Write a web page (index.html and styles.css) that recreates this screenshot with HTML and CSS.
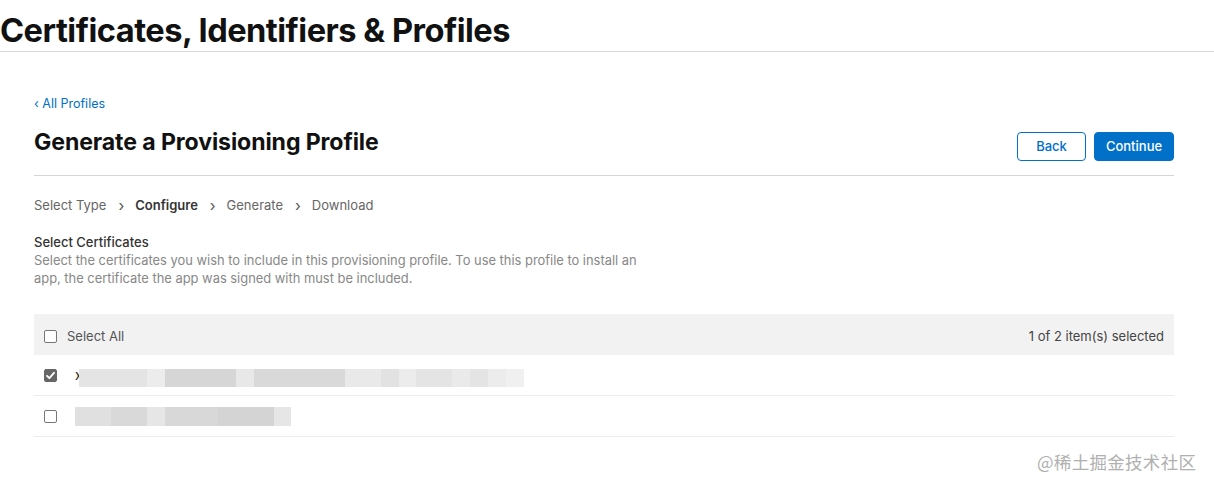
FILE: index.html
```html
<!DOCTYPE html>
<html>
<head>
<meta charset="utf-8">
<link rel="stylesheet" href="styles.css">
</head>
<body>
<header class="top">
  <h1 class="top-title">Certificates, Identifiers &amp; Profiles</h1>
</header>
<main class="main">
  <a class="back-link" href="#">‹ All Profiles</a>
  <div class="title-row">
    <h2 class="page-title">Generate a Provisioning Profile</h2>
    <div class="actions">
      <button class="btn btn-outline">Back</button>
      <button class="btn btn-primary">Continue</button>
    </div>
  </div>
  <nav class="steps">
    <span class="step">Select Type</span>
    <span class="chev">›</span>
    <span class="step step-active">Configure</span>
    <span class="chev">›</span>
    <span class="step">Generate</span>
    <span class="chev">›</span>
    <span class="step">Download</span>
  </nav>
  <section class="section">
    <h3 class="section-title">Select Certificates</h3>
    <p class="section-desc">Select the certificates you wish to include in this provisioning profile. To use this profile to install an<br>app, the certificate the app was signed with must be included.</p>
  </section>
  <div class="table">
    <div class="table-head">
      <label class="check-label"><span class="cb"></span><span>Select All</span></label>
      <span class="count">1 of 2 item(s) selected</span>
    </div>
    <div class="row">
      <span class="cb cb-checked"><svg viewBox="0 0 13 13" width="13" height="13"><path d="M3 6.8 L5.4 9.2 L10 3.8" fill="none" stroke="#fff" stroke-width="1.8" stroke-linecap="round" stroke-linejoin="round"/></svg></span>
      <span class="row-text">x</span>
      <span class="blur blur-1">
        <i style="width:68px;background:#e4e4e4"></i><i style="width:18px;background:#ececec"></i><i style="width:71px;background:#d6d6d6"></i><i style="width:18px;background:#e8e8e8"></i><i style="width:91px;background:#d9d9d9"></i><i style="width:36px;background:#e9e9e9"></i><i style="width:18px;background:#e2e2e2"></i><i style="width:17px;background:#ececec"></i><i style="width:36px;background:#e4e4e4"></i><i style="width:18px;background:#eaeaea"></i><i style="width:18px;background:#e4e4e4"></i><i style="width:18px;background:#ececec"></i><i style="width:18px;background:#f0f0f0"></i>
      </span>
    </div>
    <div class="row">
      <span class="cb"></span>
      <span class="blur blur-2">
        <i style="width:36px;background:#e0e0e0"></i><i style="width:36px;background:#d9d9d9"></i><i style="width:18px;background:#e6e6e6"></i><i style="width:53px;background:#d8d8d8"></i><i style="width:56px;background:#d4d4d4"></i><i style="width:17px;background:#e6e6e6"></i>
      </span>
    </div>
  </div>
</main>
<div class="watermark">@稀土掘金技术社区</div>
</body>
</html>
```
FILE: styles.css
```css
* { box-sizing: border-box; }
html, body { margin: 0; padding: 0; }
body {
  width: 1214px;
  height: 489px;
  overflow: hidden;
  background: #fff;
  font-family: Inter, "Noto Sans", sans-serif;
  color: #333;
  position: relative;
}
.top {
  height: 52px;
  border-bottom: 1px solid #d9d9d9;
  display: flex;
  align-items: flex-end;
}
.top-title {
  margin: 0 0 1px 0;
  font-size: 32.6px;
  font-weight: 700;
  letter-spacing: -0.5px;
  color: #111;
  line-height: 40px;
}
.main {
  width: 1140px;
  margin-left: 34px;
  padding-top: 44px;
}
.back-link {
  display: block;
  font-size: 12.5px;
  color: #0070c9;
  text-decoration: none;
  line-height: 16px;
}
.title-row {
  display: flex;
  justify-content: space-between;
  align-items: center;
  margin-top: 17px;
  border-bottom: 1px solid #d6d6d6;
  padding-bottom: 15px;
  box-sizing: content-box;
  height: 31px;
}
.page-title {
  margin: -6px 0 0 0;
  font-size: 23.1px;
  font-weight: 700;
  color: #111;
  letter-spacing: -0.1px;
}
.actions {
  display: flex;
  gap: 8px;
  align-self: flex-end;
  margin-bottom: -1px;
}
.btn {
  height: 29px;
  border-radius: 4px;
  font-family: Inter, "Noto Sans", sans-serif;
  font-size: 13px;
  font-weight: 500;
  padding: 0 0 2px 0;
  cursor: pointer;
}
.btn-outline {
  width: 69px;
  background: #fff;
  border: 1px solid #0070c9;
  color: #0070c9;
}
.btn-primary {
  width: 80px;
  background: #0070c9;
  border: 1px solid #0070c9;
  color: #fff;
}
.steps {
  display: flex;
  align-items: center;
  margin-top: 18px;
  font-size: 13px;
  line-height: 18px;
  color: #666;
}
.chev {
  font-size: 15px;
  margin: 3px 11px 0 12px;
  color: #555;
}
.step-active {
  font-weight: 600;
  color: #333;
}
.section {
  margin-top: 18px;
}
.section-title {
  margin: 0;
  font-size: 13px;
  font-weight: 500;
  color: #333;
  line-height: 18px;
}
.section-desc {
  margin: 1px 0 0 0;
  font-size: 12.9px;
  line-height: 18px;
  color: #888;
}
.table {
  margin-top: 26px;
}
.table-head {
  height: 41px;
  background: #f2f2f2;
  display: flex;
  align-items: center;
  justify-content: space-between;
  padding: 3px 10px 0 10px;
  font-size: 13px;
  color: #555;
}
.check-label {
  display: flex;
  align-items: center;
  gap: 10px;
}
.count { color: #444; }
.cb {
  width: 13px;
  height: 13px;
  border: 1px solid #767676;
  border-radius: 2px;
  background: #fff;
  display: inline-flex;
  flex: none;
}
.cb-checked {
  background: #666;
  border-color: #666;
}
.cb-checked svg { margin: -1px; }
.row {
  height: 41px;
  border-bottom: 1px solid #ececec;
  display: flex;
  align-items: center;
  padding-left: 10px;
}
.row-text {
  margin-left: 18px;
  font-size: 13px;
  color: #222;
  width: 5px;
}
.blur {
  display: flex;
  height: 18px;
}
.blur i { display: block; height: 100%; }
.blur-1 { margin-left: -1px; margin-top: 5px; }
.blur-2 { margin-left: 18px; margin-top: 1px; height: 19px; }
.watermark {
  position: absolute;
  left: 1037px;
  top: 449px;
  font-family: "Noto Sans CJK SC", sans-serif;
  font-size: 17.5px;
  color: #b0b0b0;
  letter-spacing: 0.3px;
}
```
